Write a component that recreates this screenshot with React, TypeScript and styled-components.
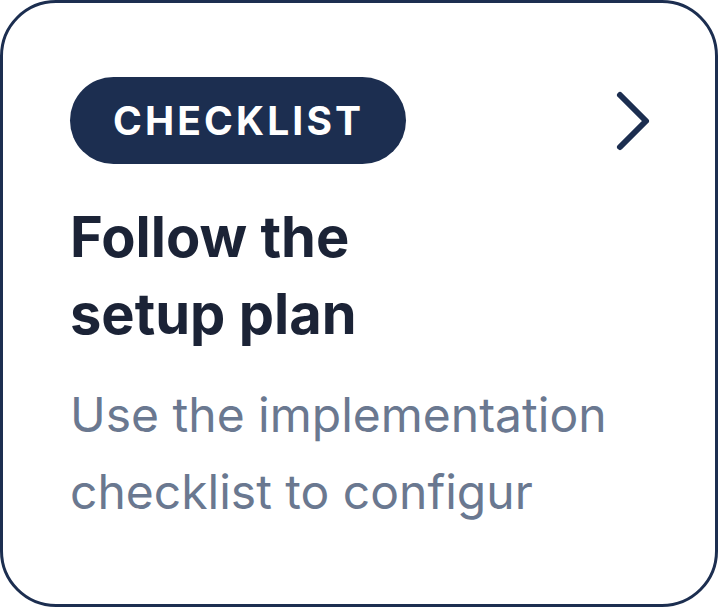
import styled, { createGlobalStyle } from 'styled-components';
import { FC } from 'react';

const GlobalStyle = createGlobalStyle`
  html, body {
    margin: 0;
    padding: 0;
    background: #ffffff;
  }
  body {
    font-family: Inter, "Noto Sans", sans-serif;
  }
`;

const Card = styled.div`
  box-sizing: border-box;
  width: 718px;
  height: 607px;
  border: 3px solid #1c2e50;
  border-radius: 56px;
  background: #ffffff;
  padding: 74px 61px 0 67px;
  display: flex;
  flex-direction: column;
  overflow: hidden;
`;

const Header = styled.div`
  display: flex;
  align-items: center;
  justify-content: space-between;
`;

const Badge = styled.span`
  display: inline-flex;
  align-items: center;
  justify-content: center;
  height: 87px;
  padding: 0 42px 0 43px;
  border-radius: 44px;
  background: #1c2e50;
  color: #ffffff;
  font-size: 39px;
  font-weight: 700;
  letter-spacing: 0.08em;
  text-transform: uppercase;
`;

const Chevron = styled.svg`
  width: 42px;
  height: 64px;
  color: #1c2e50;
`;

const Title = styled.h2`
  margin: 35px 0 0;
  font-size: 56px;
  line-height: 77px;
  font-weight: 700;
  color: #1b2336;
`;

const Description = styled.p`
  margin: 23px 0 0;
  font-size: 48px;
  line-height: 77px;
  font-weight: 400;
  color: #6a7890;
  width: 580px;
`;

const App: FC = () => (
  <>
    <GlobalStyle />
    <Card>
      <Header>
        <Badge>Checklist</Badge>
        <Chevron viewBox="0 0 42 64" fill="none">
          <path
            d="M8 6 L34 32 L8 58"
            stroke="currentColor"
            strokeWidth="6"
            strokeLinecap="round"
            strokeLinejoin="round"
          />
        </Chevron>
      </Header>
      <Title>
        Follow the
        <br />
        setup plan
      </Title>
      <Description>Use the implementation checklist to configur</Description>
    </Card>
  </>
);

export default App;
